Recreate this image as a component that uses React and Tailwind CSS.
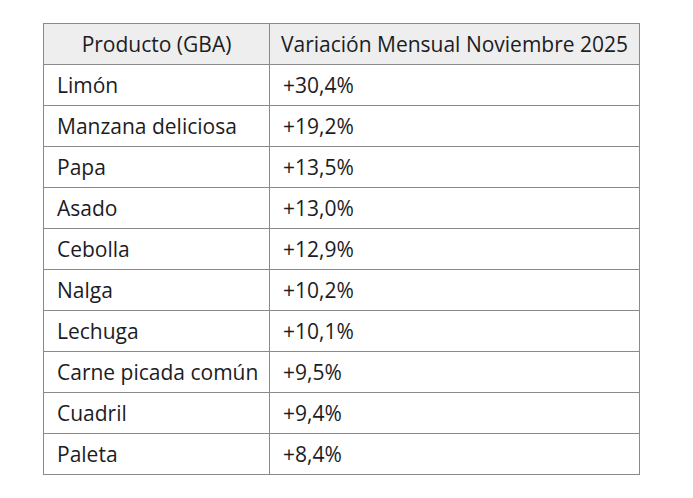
import React from "react";

const rows = [
  ["Limón", "+30,4%"],
  ["Manzana deliciosa", "+19,2%"],
  ["Papa", "+13,5%"],
  ["Asado", "+13,0%"],
  ["Cebolla", "+12,9%"],
  ["Nalga", "+10,2%"],
  ["Lechuga", "+10,1%"],
  ["Carne picada común", "+9,5%"],
  ["Cuadril", "+9,4%"],
  ["Paleta", "+8,4%"],
];

const App = () => {
  return (
    <div className="w-[693px] h-[498px] bg-white pt-[23px] pl-[43px] font-['Open_Sans',sans-serif] text-[#1c1c24]">
      <table className="border-collapse text-[21px] leading-none">
        <thead>
          <tr className="bg-[#eeeeee] h-[41px]">
            <th className="w-[226px] border border-[#8a8a8a] font-normal text-center">
              Producto (GBA)
            </th>
            <th className="w-[370px] border border-[#8a8a8a] font-normal text-center">
              Variación Mensual Noviembre 2025
            </th>
          </tr>
        </thead>
        <tbody>
          {rows.map(([name, value]) => (
            <tr key={name} className="h-[41px]">
              <td className="border border-[#8a8a8a] pl-[13px] text-left">{name}</td>
              <td className="border border-[#8a8a8a] pl-[13px] text-left">{value}</td>
            </tr>
          ))}
        </tbody>
      </table>
    </div>
  );
};

export default App;
